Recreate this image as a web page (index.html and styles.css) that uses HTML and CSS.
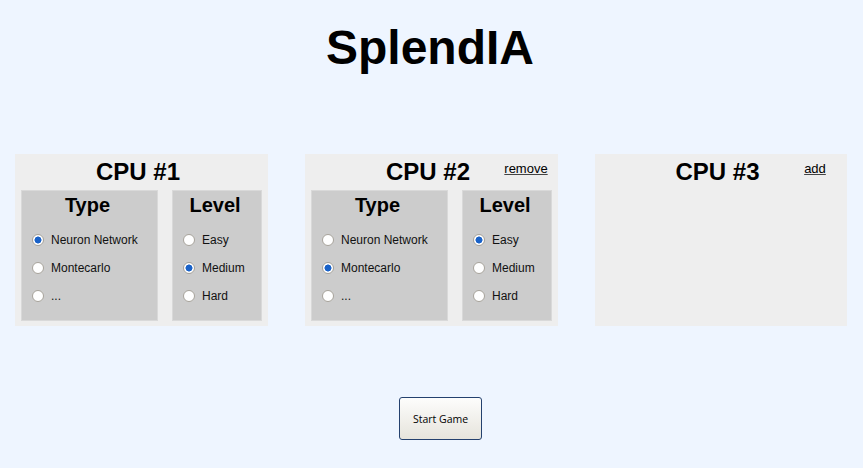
FILE: index.html
```html
<!DOCTYPE html>
<html lang="en">
<head>
<meta charset="utf-8">
<title>SplendIA</title>
<link rel="stylesheet" href="styles.css">
</head>
<body>
<header class="top">
  <h1 class="title">SplendIA</h1>
</header>
<main class="players">
  <section class="card">
    <h2 class="card-title">CPU #1</h2>
    <div class="card-body">
      <div class="group group-type">
        <h3 class="group-title">Type</h3>
        <label class="opt"><input type="radio" name="t1" checked><span>Neuron Network</span></label>
        <label class="opt"><input type="radio" name="t1"><span>Montecarlo</span></label>
        <label class="opt"><input type="radio" name="t1"><span>...</span></label>
      </div>
      <div class="group group-level">
        <h3 class="group-title">Level</h3>
        <label class="opt"><input type="radio" name="l1"><span>Easy</span></label>
        <label class="opt"><input type="radio" name="l1" checked><span>Medium</span></label>
        <label class="opt"><input type="radio" name="l1"><span>Hard</span></label>
      </div>
    </div>
  </section>
  <section class="card">
    <h2 class="card-title">CPU #2</h2>
    <a class="card-link" href="#">remove</a>
    <div class="card-body">
      <div class="group group-type">
        <h3 class="group-title">Type</h3>
        <label class="opt"><input type="radio" name="t2"><span>Neuron Network</span></label>
        <label class="opt"><input type="radio" name="t2" checked><span>Montecarlo</span></label>
        <label class="opt"><input type="radio" name="t2"><span>...</span></label>
      </div>
      <div class="group group-level">
        <h3 class="group-title">Level</h3>
        <label class="opt"><input type="radio" name="l2" checked><span>Easy</span></label>
        <label class="opt"><input type="radio" name="l2"><span>Medium</span></label>
        <label class="opt"><input type="radio" name="l2"><span>Hard</span></label>
      </div>
    </div>
  </section>
  <section class="card card-empty">
    <h2 class="card-title">CPU #3</h2>
    <a class="card-link" href="#">add</a>
  </section>
</main>
<footer class="actions">
  <button class="start" type="button">Start Game</button>
</footer>
</body>
</html>
```

FILE: styles.css
```css
html, body {
  margin: 0;
  padding: 0;
}
body {
  background: #eef5ff;
  font-family: "Liberation Sans", Arial, sans-serif;
  color: #000;
  width: 863px;
  height: 468px;
  overflow: hidden;
}
.top {
  padding-top: 21px;
  height: 133px;
  box-sizing: border-box;
}
.title {
  margin: 0;
  font-size: 48px;
  line-height: 54px;
  font-weight: bold;
  text-align: center;
  padding-right: 3px;
}
.players {
  display: flex;
  gap: 37px;
  padding-left: 15px;
  margin-top: 21px;
}
.card {
  position: relative;
  width: 253px;
  height: 172px;
  box-sizing: border-box;
  background: #eeeeee;
  padding: 4px 6px 5px;
  flex: none;
}
.card-empty {
  width: 252px;
}
.card-title {
  margin: 0 0 4px;
  font-size: 24px;
  line-height: 28px;
  font-weight: bold;
  text-align: center;
  padding-right: 7px;
}
.card-link {
  position: absolute;
  top: 7px;
  right: 0;
  width: 64px;
  text-align: center;
  font-size: 13px;
  line-height: 16px;
  color: #000;
  text-decoration: underline;
  text-decoration-color: #444;
}
.card-body {
  display: flex;
  gap: 14px;
}
.group {
  box-sizing: border-box;
  height: 131px;
  background: #cccccc;
  border: 1px solid #d9d9d9;
  padding: 2px 0 0 10px;
  flex: none;
}
.group-type { width: 137px; }
.group-level { width: 90px; }
.group-title {
  margin: 0 0 9px;
  font-size: 20px;
  line-height: 24px;
  font-weight: bold;
  text-align: center;
  padding-right: 14px;
}
.opt {
  display: flex;
  align-items: center;
  height: 28px;
  font-size: 12px;
  color: #111;
}
.opt input {
  appearance: none;
  -webkit-appearance: none;
  margin: 0 7px 0 0;
  width: 12px;
  height: 12px;
  border-radius: 50%;
  border: 1px solid #a7a39b;
  background: #fff;
  box-sizing: border-box;
  flex: none;
}
.opt input:checked {
  background: radial-gradient(circle, #1a62c8 0 3.2px, #fff 3.8px);
}
.actions {
  display: flex;
  justify-content: center;
  padding-left: 18px;
  margin-top: 71px;
}
.start {
  width: 83px;
  height: 43px;
  border: 1px solid #24416e;
  border-radius: 3px;
  background: linear-gradient(#fdfdfc, #e6e4dc);
  font-family: "Open Sans", "Noto Sans", sans-serif;
  font-size: 10.5px;
  color: #000;
  padding: 0;
}
```
